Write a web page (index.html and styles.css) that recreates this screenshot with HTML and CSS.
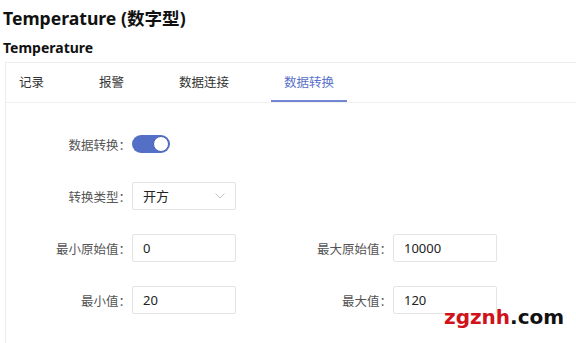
FILE: index.html
```html
<!DOCTYPE html>
<html lang="zh-CN">
<head>
    <meta charset="UTF-8">
    <title>Temperature</title>
    <link rel="stylesheet" href="styles.css">
</head>
<body>
    <div class="page-title">Temperature (数字型)</div>
    <div class="sub-title">Temperature</div>
    <div class="panel">
        <div class="tabs">
            <div class="tab">记录</div>
            <div class="tab">报警</div>
            <div class="tab">数据连接</div>
            <div class="tab active">数据转换</div>
        </div>
        <div class="form">
            <div class="row">
                <div class="field">
                    <label class="label">数据转换：</label>
                    <div class="switch"><span class="knob"></span></div>
                </div>
            </div>
            <div class="row">
                <div class="field">
                    <label class="label">转换类型：</label>
                    <div class="box select">
                        <span>开方</span>
                        <svg class="chevron" width="10" height="6" viewBox="0 0 10 6"><path d="M0.5 0.5 L5 5 L9.5 0.5" fill="none" stroke="#c0c0c0" stroke-width="1"/></svg>
                    </div>
                </div>
            </div>
            <div class="row">
                <div class="field">
                    <label class="label">最小原始值：</label>
                    <div class="box">0</div>
                </div>
                <div class="field">
                    <label class="label">最大原始值：</label>
                    <div class="box">10000</div>
                </div>
            </div>
            <div class="row">
                <div class="field">
                    <label class="label">最小值：</label>
                    <div class="box">20</div>
                </div>
                <div class="field">
                    <label class="label">最大值：</label>
                    <div class="box">120</div>
                </div>
            </div>
        </div>
    </div>
    <div class="watermark"><span class="red">zgznh</span>.com</div>
</body>
</html>
```
FILE: styles.css
```css
body {
    margin: 0;
    background-color: white;
    font-family: "Noto Sans", "Noto Sans CJK SC", sans-serif;
    color: #333;
    overflow: hidden;
    height: 343px;
    position: relative;
    display: flex;
    flex-direction: column;
}
.page-title {
    font-size: 17.6px;
    font-weight: bold;
    color: #111;
    padding: 4px 0 0 3px;
    height: 28px;
    line-height: 28px;
}
.sub-title {
    font-size: 14px;
    font-weight: bold;
    color: #111;
    padding-left: 3px;
    margin-top: 2px;
    height: 28px;
    line-height: 28px;
}
.panel {
    flex: 1;
    min-height: 0;
    margin-left: 5px;
    border-top: 1px solid #ececec;
    border-left: 1px solid #ececec;
}
.tabs {
    display: flex;
    height: 39px;
    border-bottom: 1px solid #f0f0f0;
}
.tab {
    font-size: 12.5px;
    color: #333;
    padding: 0 13px;
    margin-right: 29px;
    line-height: 39px;
    border-bottom: 2px solid transparent;
}
.tab.active {
    color: #5a72c9;
    border-bottom-color: #7286d3;
}
.form {
    padding: 27px 0 0 25px;
    display: flex;
    flex-direction: column;
    gap: 24px;
}
.row {
    display: flex;
    gap: 56px;
    height: 28px;
}
.field {
    display: flex;
    align-items: center;
}
.label {
    width: 100px;
    text-align: right;
    font-size: 12.5px;
    color: #555;
    margin-right: 1px;
}
.box {
    box-sizing: border-box;
    width: 104px;
    height: 28px;
    border: 1px solid #e4e4e4;
    border-radius: 2px;
    padding-left: 10px;
    font-size: 13px;
    color: #222;
    line-height: 26px;
}
.select {
    display: flex;
    align-items: center;
    justify-content: space-between;
    padding-right: 10px;
}
.chevron {
    display: block;
}
.switch {
    width: 38px;
    height: 18px;
    border-radius: 9px;
    background-color: #5470c6;
    position: relative;
}
.knob {
    position: absolute;
    right: 1px;
    top: 1px;
    width: 16px;
    height: 16px;
    box-sizing: border-box;
    border-radius: 50%;
    background-color: white;
    border: 1px solid #4a62b8;
}
.watermark {
    position: absolute;
    left: 444px;
    top: 305px;
    font-family: "DejaVu Sans", sans-serif;
    font-weight: bold;
    font-size: 20px;
    color: #111;
}
.red {
    color: #d0121b;
}
```
